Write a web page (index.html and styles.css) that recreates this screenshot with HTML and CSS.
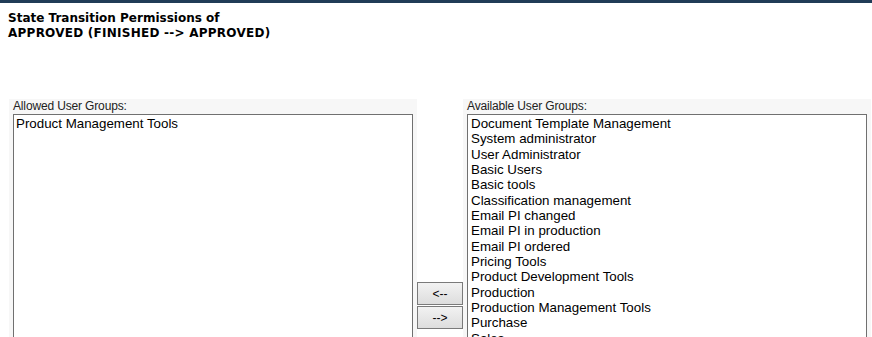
FILE: index.html
```html
<!DOCTYPE html>
<html lang="en">
<head>
  <meta charset="UTF-8">
  <title>State Transition Permissions</title>
  <link rel="stylesheet" href="styles.css">
</head>
<body>
  <div class="top-bar"></div>

  <h3 class="page-title">State Transition Permissions of<br><span class="state-name">APPROVED (FINISHED --&gt; APPROVED)</span></h3>

  <div class="permissions">
    <div class="group-cell">
      <label for="allowed">Allowed User Groups:</label>
      <select id="allowed" class="group-list" multiple>
        <option>Product Management Tools</option>
      </select>
    </div>

    <div class="move-cell">
      <button class="move-btn" type="button">&lt;--</button>
      <button class="move-btn" type="button">--&gt;</button>
    </div>

    <div class="group-cell">
      <label for="available">Available User Groups:</label>
      <select id="available" class="group-list" multiple>
        <option>Document Template Management</option>
        <option>System administrator</option>
        <option>User Administrator</option>
        <option>Basic Users</option>
        <option>Basic tools</option>
        <option>Classification management</option>
        <option>Email PI changed</option>
        <option>Email PI in production</option>
        <option>Email PI ordered</option>
        <option>Pricing Tools</option>
        <option>Product Development Tools</option>
        <option>Production</option>
        <option>Production Management Tools</option>
        <option>Purchase</option>
        <option>Sales</option>
        <option>Sales Tools</option>
      </select>
    </div>
  </div>
</body>
</html>
```

FILE: styles.css
```css
* {
  box-sizing: border-box;
}

body {
  margin: 0;
  font-family: "Liberation Sans", Arial, sans-serif;
  color: #000;
  background: #fff;
}

.top-bar {
  height: 3px;
  background: #203c57;
}

.page-title {
  margin: 0;
  padding: 8px 0 0 8px;
  font-family: "DejaVu Sans", Verdana, sans-serif;
  font-size: 12px;
  font-weight: bold;
  line-height: 15px;
  height: 96px;
}

.state-name {
  letter-spacing: 0.25px;
}

.permissions {
  display: flex;
  padding-left: 9px;
}

.group-cell {
  width: 408px;
  background: #f7f7f7;
  padding: 0 4px;
  display: flex;
  flex-direction: column;
}

.group-cell label {
  font-size: 12px;
  line-height: 15px;
  color: #222;
  letter-spacing: -0.15px;
}

.group-list {
  width: 400px;
  height: 260px;
  border: 1px solid #707070;
  border-radius: 0;
  background: #fff;
  padding: 1px 2px;
  font-family: "Liberation Sans", Arial, sans-serif;
  font-size: 13.33px;
  color: #000;
  outline: none;
  overflow: hidden;
}

.group-list option {
  padding: 0;
  line-height: 15.33px;
  min-height: 15.33px;
}

#available option {
  padding-left: 1px;
}

.move-cell {
  width: 46px;
  padding-top: 183px;
  display: flex;
  flex-direction: column;
  gap: 1px;
}

.move-btn {
  height: 23px;
  width: 46px;
  margin: 0;
  border: 1px solid #7a7a7a;
  border-radius: 0;
  background: linear-gradient(to bottom, #f2f2f2, #dddddd);
  font-family: "Liberation Sans", Arial, sans-serif;
  font-size: 12px;
  color: #000;
  padding: 0;
}
```
